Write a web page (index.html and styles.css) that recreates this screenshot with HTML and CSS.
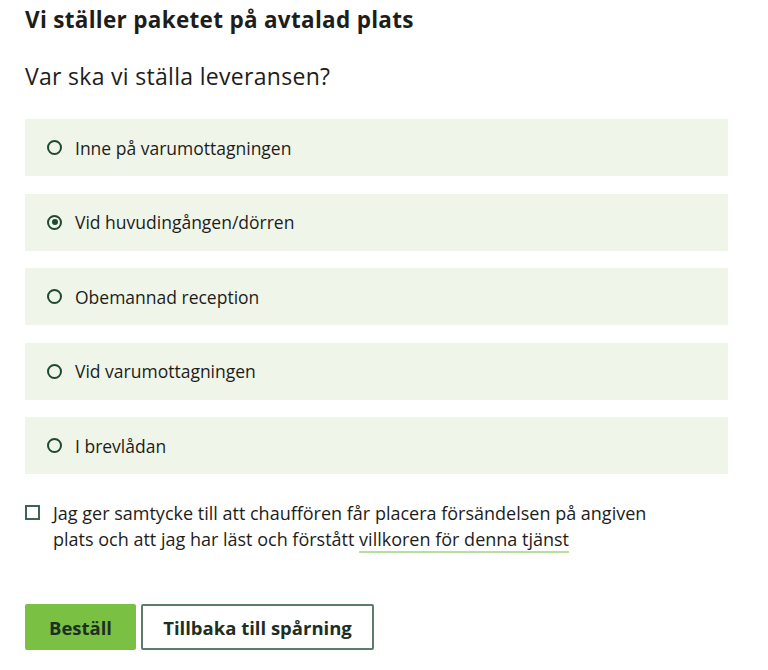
FILE: index.html
```html
<!DOCTYPE html>
<html lang="sv">
<head>
    <meta charset="UTF-8">
    <meta name="viewport" content="width=device-width, initial-scale=1.0">
    <title>Leverans</title>
    <link rel="stylesheet" href="styles.css">
</head>
<body>
    <div class="container">
        <h2>Vi ställer paketet på avtalad plats</h2>
        <h3>Var ska vi ställa leveransen?</h3>

        <!-- Options -->
        <div class="options">
            <label class="option">
                <input type="radio" name="place">
                <span>Inne på varumottagningen</span>
            </label>
            <label class="option">
                <input type="radio" name="place" checked>
                <span>Vid huvudingången/dörren</span>
            </label>
            <label class="option">
                <input type="radio" name="place">
                <span>Obemannad reception</span>
            </label>
            <label class="option">
                <input type="radio" name="place">
                <span>Vid varumottagningen</span>
            </label>
            <label class="option">
                <input type="radio" name="place">
                <span>I brevlådan</span>
            </label>
        </div>

        <!-- Consent -->
        <label class="consent">
            <input type="checkbox">
            <span>Jag ger samtycke till att chauffören får placera försändelsen på angiven plats och att jag har läst och förstått <a href="#">villkoren för denna tjänst</a></span>
        </label>

        <div class="actions">
            <button class="primary">Beställ</button>
            <button class="secondary">Tillbaka till spårning</button>
        </div>
    </div>
</body>
</html>
```

FILE: styles.css
```css
* {
    box-sizing: border-box;
    margin: 0;
    padding: 0;
    font-family: "Open Sans", sans-serif;
}

body {
    background-color: #ffffff;
    color: #1d1d1b;
}

.container {
    padding: 5px 40px 0 25px;
}

h2 {
    font-size: 22.5px;
    font-weight: 700;
    line-height: 30px;
    letter-spacing: 0.3px;
}

h3 {
    font-size: 23px;
    font-weight: 400;
    line-height: 30px;
    letter-spacing: 0.3px;
    margin-top: 26px;
}

.options {
    display: flex;
    flex-direction: column;
    gap: 17.5px;
    margin-top: 28px;
    width: 703px;
}

.option {
    display: flex;
    align-items: center;
    gap: 13px;
    height: 57px;
    padding-left: 22px;
    background-color: #f0f5e9;
    font-size: 17.5px;
    cursor: pointer;
}

.option input {
    appearance: none;
    width: 15px;
    height: 15px;
    border: 2px solid #1e4a33;
    border-radius: 50%;
    display: grid;
    place-content: center;
}

.option input:checked::before {
    content: "";
    width: 6px;
    height: 6px;
    border-radius: 50%;
    background-color: #1e4a33;
}

.consent {
    display: flex;
    align-items: flex-start;
    gap: 13px;
    margin-top: 26px;
    width: 660px;
    font-size: 18px;
    line-height: 26px;
}

.consent input {
    appearance: none;
    flex: none;
    width: 15px;
    height: 15px;
    margin-top: 5px;
    border: 2px solid #3d6652;
}

.consent a {
    color: inherit;
    text-decoration: underline 2px #b7e0a0;
    text-underline-offset: 5px;
}

.actions {
    display: flex;
    gap: 5px;
    margin-top: 52px;
}

.actions button {
    font-size: 18.5px;
    font-weight: 700;
    height: 46px;
    border-radius: 2px;
    cursor: pointer;
    color: #1d2f25;
}

.primary {
    width: 111px;
    background-color: #7ac143;
    border: none;
}

.secondary {
    width: 233px;
    background-color: #ffffff;
    border: 2px solid #5d7c6c;
}
```
